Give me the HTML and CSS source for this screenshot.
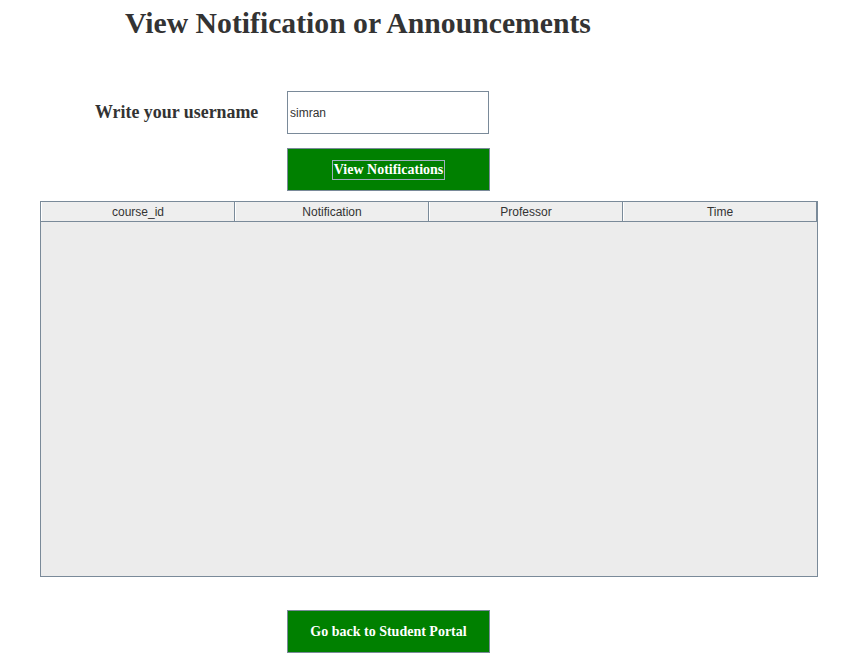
FILE: index.html
```html
<!DOCTYPE html>
<html>
<head>
<meta charset="utf-8">
<link rel="stylesheet" href="styles.css">
</head>
<body>
<div class="page">
  <h1 class="title">View Notification or Announcements</h1>
  <div class="form">
    <label class="label" for="user">Write your username</label>
    <div class="input">simran</div>
    <div class="spacer"></div>
    <button class="btn btn-view"><span class="focus">View Notifications</span></button>
  </div>
  <div class="table">
    <div class="thead">
      <div class="th">course_id</div>
      <div class="th">Notification</div>
      <div class="th">Professor</div>
      <div class="th">Time</div>
    </div>
    <div class="tbody"></div>
  </div>
  <div class="footer">
    <button class="btn btn-back">Go back to Student Portal</button>
  </div>
</div>
</body>
</html>
```

FILE: styles.css
```css
* { box-sizing: border-box; }
html, body { margin: 0; padding: 0; background: #ffffff; }
.page { width: 844px; height: 671px; position: relative; }
.title {
  margin: 0;
  padding: 5px 0 0 125px;
  height: 91px;
  font-family: "Liberation Serif", serif;
  font-weight: bold;
  font-size: 29.7px;
  line-height: 36px;
  color: #333333;
}
.form {
  display: grid;
  grid-template-columns: 287px 203px;
  grid-template-rows: 43px 43px;
  row-gap: 14px;
}
.label {
  padding-left: 95px;
  align-self: center;
  font-family: "Liberation Serif", serif;
  font-weight: bold;
  font-size: 17.9px;
  color: #333333;
  padding-bottom: 1px;
}
.input {
  border: 1px solid #7a8a99;
  display: flex;
  align-items: center;
  padding-left: 2px;
  font-family: "Liberation Sans", Arial, sans-serif;
  font-size: 12px;
  color: #333333;
  width: 202px;
}
.btn {
  background: #008000;
  border: 1px solid #7a8a99;
  color: #ffffff;
  font-family: "Liberation Serif", serif;
  font-weight: bold;
  font-size: 14px;
  width: 203px;
  height: 43px;
  padding: 0;
  display: flex;
  align-items: center;
  justify-content: center;
}
.focus {
  border: 1px solid #9fb0c0;
  padding: 1px 1px;
  line-height: 16px;
}
.table {
  margin: 10px 0 0 40px;
  width: 778px;
  height: 376px;
  border: 1px solid #7a8a99;
  background: #ececec;
  display: flex;
  flex-direction: column;
}
.thead {
  display: grid;
  grid-template-columns: 194px 194px 194px 194px;
  height: 20px;
  border-bottom: 1px solid #7a8a99;
  background: #eeeeee;
}
.th {
  border-right: 1px solid #7a8a99;
  border-left: 1px solid #ffffff;
  text-align: center;
  font-family: "Liberation Sans", Arial, sans-serif;
  font-size: 12px;
  line-height: 19px;
  padding-top: 1px;
  overflow: hidden;
  color: #333333;
}
.tbody { flex: 1; }
.footer {
  padding: 33px 0 0 287px;
}
```
